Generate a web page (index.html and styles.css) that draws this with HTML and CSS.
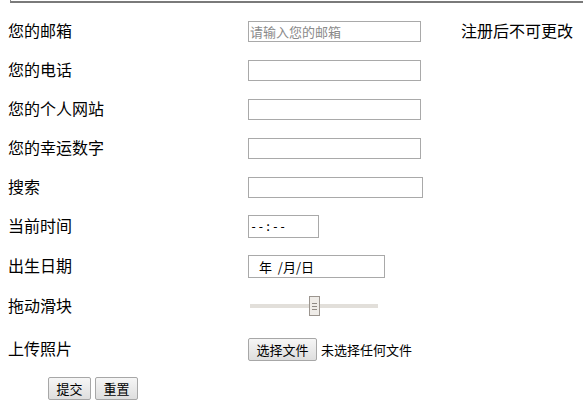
FILE: index.html
```html
<!DOCTYPE html>
<html>
<head>
<meta charset="utf-8">
<link rel="stylesheet" href="styles.css">
</head>
<body>
<div class="topline"></div>
<form class="form">
  <div class="row r1">
    <span class="label">您的邮箱</span>
    <span class="field"><input class="text" type="text" placeholder="请输入您的邮箱"></span>
    <span class="label note">注册后不可更改</span>
  </div>
  <div class="row r2">
    <span class="label">您的电话</span>
    <span class="field"><input class="text" type="text"></span>
  </div>
  <div class="row r3">
    <span class="label">您的个人网站</span>
    <span class="field"><input class="text" type="text"></span>
  </div>
  <div class="row r4">
    <span class="label">您的幸运数字</span>
    <span class="field"><input class="text" type="text"></span>
  </div>
  <div class="row r5">
    <span class="label">搜索</span>
    <span class="field"><input class="text search" type="text"></span>
  </div>
  <div class="row r6">
    <span class="label">当前时间</span>
    <span class="field"><span class="fake time">--:--</span></span>
  </div>
  <div class="row r7">
    <span class="label">出生日期</span>
    <span class="field"><span class="fake date">年  /月/日</span></span>
  </div>
  <div class="row r8">
    <span class="label">拖动滑块</span>
    <span class="field">
      <span class="slider"><span class="track"></span><span class="thumb"><i></i><i></i><i></i></span></span>
    </span>
  </div>
  <div class="row r9">
    <span class="label">上传照片</span>
    <span class="field"><span class="btn filebtn">选择文件</span><span class="nofile">未选择任何文件</span></span>
  </div>
  <div class="row r10 actions">
    <button class="btn" type="button">提交</button>
    <button class="btn" type="button">重置</button>
  </div>
</form>
</body>
</html>
```
FILE: styles.css
```css
html, body {
  margin: 0;
  padding: 0;
  background: #fff;
}
body {
  font-family: "Noto Sans CJK SC", "Liberation Sans", sans-serif;
  font-size: 16px;
  color: #000;
}
.topline {
  margin-left: 10px;
  height: 1px;
  border-left: 1px solid #888;
  border-bottom: 2px solid #7a7a7a;
}
.form {
  padding: 9px 0 0 8px;
  margin: 0;
}
.row {
  display: grid;
  grid-template-columns: 240px 213px auto;
  align-items: center;
}
.r1, .r2, .r3, .r4, .r5, .r6 { height: 39px; }
.r7, .r8 { height: 40px; }
.r9 { height: 47px; }
.r10 { height: 30px; }
.label {
  line-height: 20px;
  white-space: nowrap;
  padding-bottom: 3px;
}
.field {
  display: flex;
  align-items: center;
}
.text {
  box-sizing: border-box;
  width: 173px;
  height: 21px;
  border: 1px solid #a9a9a9;
  padding: 0 1px;
  margin: 0;
  font-family: "Noto Sans CJK SC", sans-serif;
  font-size: 13px;
  outline: none;
}
.text::placeholder {
  color: #8a8a8a;
}
.search { width: 175px; }
.fake {
  box-sizing: border-box;
  height: 23px;
  border: 1px solid #a9a9a9;
  display: flex;
  align-items: center;
  font-size: 13px;
  white-space: pre;
}
.time {
  width: 71px;
  padding-left: 1px;
  font-family: "DejaVu Sans Mono", monospace;
  font-size: 12px;
}
.date {
  width: 137px;
  padding-left: 10px;
}
.slider {
  position: relative;
  width: 130px;
  height: 20px;
  display: flex;
  align-items: center;
}
.track {
  display: block;
  margin-left: 2px;
  width: 128px;
  height: 4px;
  background: #e2dfda;
}
.thumb {
  position: absolute;
  left: 61px;
  top: 0;
  box-sizing: border-box;
  width: 11px;
  height: 20px;
  border: 1px solid #9b958f;
  background: #efece8;
  display: flex;
  flex-direction: column;
  align-items: center;
  justify-content: center;
  gap: 2px;
}
.thumb i {
  display: block;
  width: 5px;
  height: 1px;
  background: #8f8a85;
}
.btn {
  box-sizing: border-box;
  height: 23px;
  padding: 0 5px;
  border: 1px solid #a7a7a7;
  border-radius: 2px;
  background: linear-gradient(#f6f6f6, #dedede);
  font-family: "Noto Sans CJK SC", sans-serif;
  font-size: 13px;
  color: #000;
  display: inline-flex;
  align-items: center;
  justify-content: center;
}
.filebtn { width: 69px; }
.nofile {
  font-size: 13px;
  margin-left: 4px;
}
.actions {
  display: flex;
  gap: 4px;
  padding-left: 40px;
}
.actions .btn {
  width: 43px;
  margin: 0;
}
```
